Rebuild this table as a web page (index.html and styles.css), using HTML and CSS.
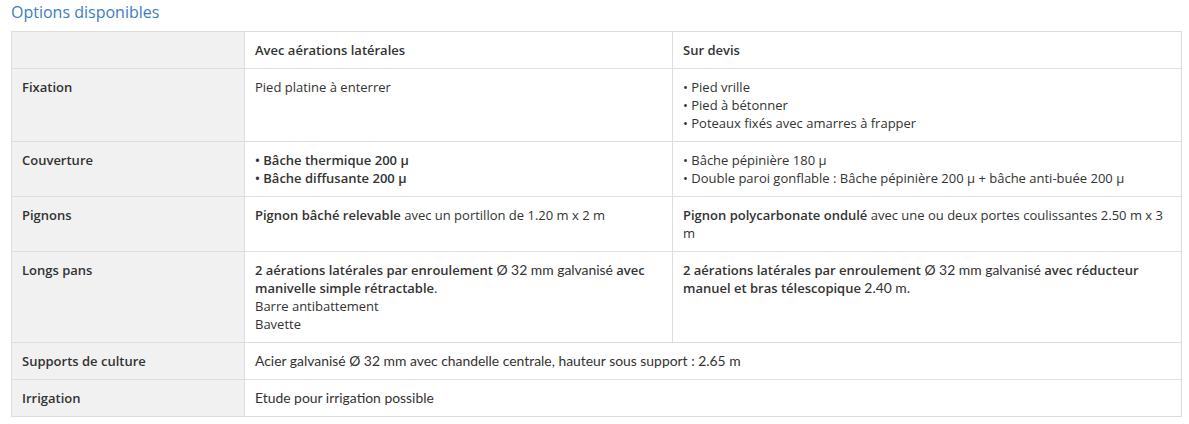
FILE: index.html
```html
<!DOCTYPE html>
<html lang="fr">
<head>
<meta charset="utf-8">
<title>Options disponibles</title>
<link rel="stylesheet" href="styles.css">
</head>
<body>
<div class="wrap">
  <h2 class="title">Options disponibles</h2>
  <table class="opts">
    <colgroup>
      <col class="c1"><col class="c2"><col class="c3">
    </colgroup>
    <tr>
      <th class="lab"></th>
      <th>Avec aérations latérales</th>
      <th>Sur devis</th>
    </tr>
    <tr>
      <th class="lab">Fixation</th>
      <td>Pied platine à enterrer</td>
      <td>• Pied vrille<br>• Pied à bétonner<br>• Poteaux fixés avec amarres à frapper</td>
    </tr>
    <tr>
      <th class="lab">Couverture</th>
      <td><b>• Bâche thermique 200 µ<br>• Bâche diffusante 200 µ</b></td>
      <td>• Bâche pépinière 180 µ<br>• Double paroi gonflable : Bâche pépinière 200 µ + bâche anti-buée 200 µ</td>
    </tr>
    <tr>
      <th class="lab">Pignons</th>
      <td><b>Pignon bâché relevable</b> avec un portillon de 1.20 m x 2 m</td>
      <td><b>Pignon polycarbonate ondulé</b> avec une ou deux portes coulissantes 2.50 m x 3 m</td>
    </tr>
    <tr>
      <th class="lab">Longs pans</th>
      <td><b>2 aérations latérales par enroulement</b> <span class="cd">Ø 32 mm galvanisé</span> <b>avec manivelle simple rétractable</b>.<br>Barre antibattement<br>Bavette</td>
      <td><b>2 aérations latérales par enroulement</b> <span class="cd">Ø 32 mm galvanisé</span> <b>avec réducteur manuel et bras télescopique</b> <span class="cd">2.40 m.</span></td>
    </tr>
    <tr>
      <th class="lab">Supports de culture</th>
      <td colspan="2"><span class="cd">Acier galvanisé Ø 32 mm avec chandelle centrale, hauteur sous support : 2.65 m</span></td>
    </tr>
    <tr>
      <th class="lab">Irrigation</th>
      <td colspan="2"><span class="cd">Etude pour irrigation possible</span></td>
    </tr>
  </table>
</div>
</body>
</html>
```
FILE: styles.css
```css
html, body {
  margin: 0;
  padding: 0;
  background: #ffffff;
}
body {
  font-family: "Open Sans", "DejaVu Sans", sans-serif;
  color: #333333;
  font-size: 13px;
}
.wrap {
  padding: 0 8px 0 11px;
}
.title {
  margin: 0;
  padding-top: 1px;
  height: 30px;
  font-size: 16px;
  font-weight: 400;
  line-height: 22px;
  color: #3b7dc4;
}
.opts {
  width: 1170px;
  border-collapse: collapse;
  table-layout: fixed;
}
.c1 { width: 233px; }
.c2 { width: 428px; }
.c3 { width: 509px; }
.opts th, .opts td {
  border: 1px solid #dddddd;
  padding: 9px 10px;
  text-align: left;
  vertical-align: top;
  line-height: 18px;
  font-size: 13px;
}
.opts th {
  font-weight: 600;
}
.opts td {
  font-weight: 400;
}
.opts b {
  font-weight: 600;
}
.opts .lab {
  background: #f1f1f1;
}
.cd {
  font-family: Lato, "Open Sans", sans-serif;
  font-size: 13.9px;
}
```
